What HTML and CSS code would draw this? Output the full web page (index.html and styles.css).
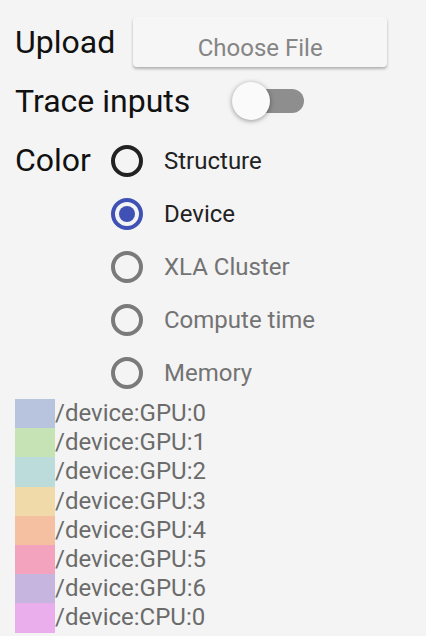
FILE: index.html
```html
<!DOCTYPE html>
<html>
<head>
<meta charset="utf-8">
<link rel="stylesheet" href="styles.css">
</head>
<body>
<div class="panel">
  <div class="row row-upload">
    <span class="title">Upload</span>
    <div class="file-btn">Choose File</div>
  </div>
  <div class="row row-trace">
    <span class="title">Trace inputs</span>
    <div class="toggle"><div class="track"></div><div class="knob"></div></div>
  </div>
  <div class="row row-color">
    <span class="title color-title">Color</span>
    <div class="radios">
      <div class="radio-item dark"><span class="radio"></span><span class="radio-label">Structure</span></div>
      <div class="radio-item checked"><span class="radio"></span><span class="radio-label">Device</span></div>
      <div class="radio-item"><span class="radio"></span><span class="radio-label">XLA Cluster</span></div>
      <div class="radio-item"><span class="radio"></span><span class="radio-label">Compute time</span></div>
      <div class="radio-item"><span class="radio"></span><span class="radio-label">Memory</span></div>
    </div>
  </div>
  <div class="legend">
    <div class="legend-row"><span class="swatch c0"></span><span class="legend-text">/device:GPU:0</span></div>
    <div class="legend-row"><span class="swatch c1"></span><span class="legend-text">/device:GPU:1</span></div>
    <div class="legend-row"><span class="swatch c2"></span><span class="legend-text">/device:GPU:2</span></div>
    <div class="legend-row"><span class="swatch c3"></span><span class="legend-text">/device:GPU:3</span></div>
    <div class="legend-row"><span class="swatch c4"></span><span class="legend-text">/device:GPU:4</span></div>
    <div class="legend-row"><span class="swatch c5"></span><span class="legend-text">/device:GPU:5</span></div>
    <div class="legend-row"><span class="swatch c6"></span><span class="legend-text">/device:GPU:6</span></div>
    <div class="legend-row"><span class="swatch c7"></span><span class="legend-text">/device:CPU:0</span></div>
  </div>
</div>
</body>
</html>
```

FILE: styles.css
```css
html, body {
  margin: 0;
  padding: 0;
  background: #f4f4f4;
}
body {
  font-family: Roboto, "Liberation Sans", sans-serif;
  width: 426px;
  height: 636px;
  overflow: hidden;
}
.panel {
  padding-left: 15px;
}
.row {
  display: flex;
  align-items: center;
}
.title {
  font-size: 32px;
  color: #111;
  white-space: nowrap;
}
.row-upload {
  padding-top: 17px;
  height: 50px;
  gap: 18px;
}
.file-btn {
  width: 254px;
  height: 50px;
  box-sizing: border-box;
  padding-top: 17px;
  text-align: center;
  font-size: 24px;
  line-height: 28px;
  color: #858585;
  background: #f6f6f6;
  border-radius: 4px;
  box-shadow: 0 2px 3px rgba(0, 0, 0, 0.28);
}
.row-trace {
  margin-top: 14px;
  height: 40px;
  gap: 42px;
}
.toggle {
  position: relative;
  width: 72px;
  height: 40px;
}
.track {
  position: absolute;
  left: 7px;
  top: 8px;
  width: 65px;
  height: 24px;
  border-radius: 12px;
  background: #8e8e8e;
}
.knob {
  position: absolute;
  left: 0;
  top: 1px;
  width: 38px;
  height: 38px;
  border-radius: 50%;
  background: #fafafa;
  box-shadow: 0 1px 5px rgba(0, 0, 0, 0.4);
}
.row-color {
  margin-top: 13px;
  align-items: flex-start;
}
.color-title {
  width: 96px;
  line-height: 53px;
}
.radios {
  display: flex;
  flex-direction: column;
}
.radio-item {
  display: flex;
  align-items: center;
  height: 53px;
  gap: 21px;
  font-size: 24px;
  color: #737373;
}
.radio {
  width: 32px;
  height: 32px;
  box-sizing: border-box;
  border: 4px solid #7a7a7a;
  border-radius: 50%;
  display: flex;
  align-items: center;
  justify-content: center;
}
.dark {
  color: #222;
}
.dark .radio {
  border-color: #222;
}
.checked {
  color: #222;
}
.checked .radio {
  border-color: #3f51b5;
}
.checked .radio::after {
  content: "";
  width: 16px;
  height: 16px;
  border-radius: 50%;
  background: #3f51b5;
}
.legend {
  display: flex;
  flex-direction: column;
}
.legend-row {
  display: flex;
  height: 29.2px;
}
.swatch {
  width: 40px;
  height: 100%;
}
.legend-text {
  font-size: 24px;
  line-height: 29.2px;
  color: #6b6b6b;
}
.c0 { background: #b8c4dd; }
.c1 { background: #c6e3b6; }
.c2 { background: #bcdcdb; }
.c3 { background: #f0daa9; }
.c4 { background: #f5bfa1; }
.c5 { background: #f3a3bd; }
.c6 { background: #c6b6df; }
.c7 { background: #ebaeec; }
```
